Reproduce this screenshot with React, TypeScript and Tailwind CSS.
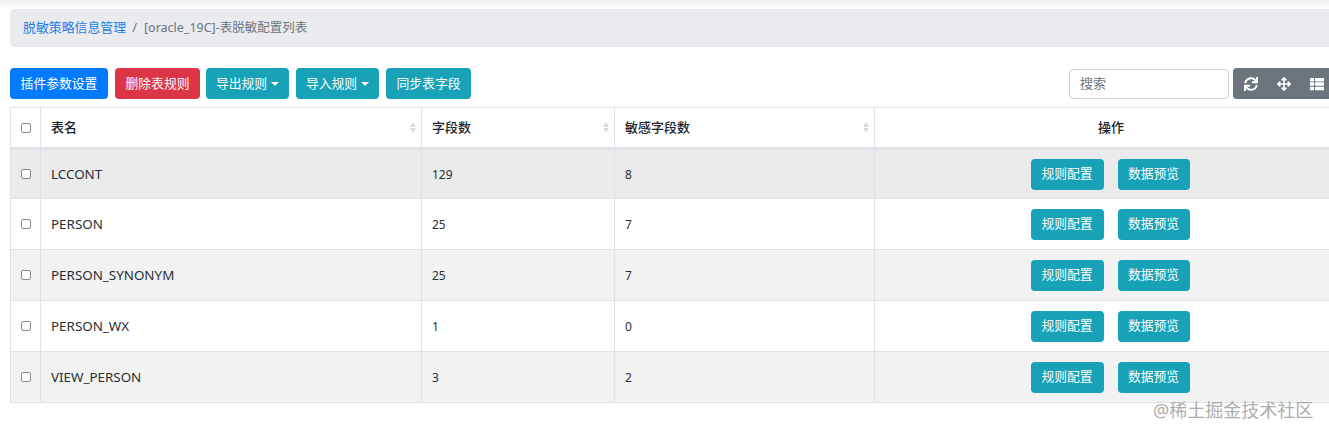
import { FaSync, FaArrowsAlt, FaThList } from "react-icons/fa";

const rows = [
  { name: "LCCONT", fields: 129, sensitive: 8, bg: "bg-[#ebebeb]", h: "h-[50px]" },
  { name: "PERSON", fields: 25, sensitive: 7, bg: "bg-white", h: "h-[51px]" },
  { name: "PERSON_SYNONYM", fields: 25, sensitive: 7, bg: "bg-[#f2f2f2]", h: "h-[51px]" },
  { name: "PERSON_WX", fields: 1, sensitive: 0, bg: "bg-white", h: "h-[51px]" },
  { name: "VIEW_PERSON", fields: 3, sensitive: 2, bg: "bg-[#f2f2f2]", h: "h-[51px]" },
];

function Button({ label, color, caret, width }: { label: string; color: string; caret?: boolean; width: string }) {
  return (
    <button className={`${color} ${width} h-[31px] rounded-[4px] text-white text-[12.8px] flex items-center justify-center gap-1`}>
      {label}
      {caret && <span className="w-0 h-0 border-x-[4px] border-x-transparent border-t-[4px] border-t-white" />}
    </button>
  );
}

function SortArrows() {
  return (
    <span className="flex flex-col gap-[1px]">
      <span className="w-0 h-0 border-x-[3px] border-x-transparent border-b-[5px] border-b-[#dcdcdc]" />
      <span className="w-0 h-0 border-x-[3px] border-x-transparent border-t-[5px] border-t-[#dcdcdc]" />
    </span>
  );
}

function Checkbox() {
  return <span className="block mx-auto w-[10px] h-[10px] border border-[#8a8a8a] rounded-[2px] bg-white" />;
}

export default function App() {
  return (
    <div className="h-[436px] w-[1329px] overflow-hidden relative bg-white font-['Noto_Sans','Noto_Sans_CJK_SC',sans-serif] text-[13px] text-[#2b2f33]">
      {/* top shadow */}
      <div className="h-[9px] bg-gradient-to-b from-[#f1f1f1] to-white" />

      <div className="w-[1348px] pl-[10px]">
        {/* breadcrumb */}
        <div className="h-[38px] bg-[#e9ebee] rounded-[4px] flex items-center pl-[13px]">
          <span className="text-[#1d7fe6] text-[12.9px]">脱敏策略信息管理</span>
          <span className="text-[#6c757d] ml-[6px] mr-[7px]">/</span>
          <span className="text-[#6c757d] text-[12.5px]">[oracle_19C]-表脱敏配置列表</span>
        </div>

        {/* toolbar */}
        <div className="flex items-center mt-[21px] h-[31px]">
          <div className="flex gap-[7px]">
            <Button label="插件参数设置" color="bg-[#007bff]" width="w-[98px]" />
            <Button label="删除表规则" color="bg-[#dc3545]" width="w-[85px] -mr-px" />
            <Button label="导出规则" color="bg-[#17a2b8]" width="w-[83px]" caret />
            <Button label="导入规则" color="bg-[#17a2b8]" width="w-[83px]" caret />
            <Button label="同步表字段" color="bg-[#17a2b8]" width="w-[85px]" />
          </div>
          <div className="ml-[598px] w-[160px] h-[30px] border border-[#ced4da] rounded-[4px] flex items-center pl-[10px] text-[#6c757d]">
            搜索
          </div>
          <div className="ml-[4px] w-[115px] h-[31px] bg-[#6c757d] rounded-[4px] flex items-center text-white pl-[11px] gap-[19px]">
            <FaSync className="w-[14px] h-[14px]" />
            <FaArrowsAlt className="w-[14px] h-[14px]" />
            <FaThList className="w-[14px] h-[14px]" />
          </div>
        </div>

        {/* table */}
        <table className="mt-[8px] w-[1338px] table-fixed border-collapse">
          <colgroup>
            <col className="w-[30px]" />
            <col className="w-[381px]" />
            <col className="w-[193px]" />
            <col className="w-[260px]" />
            <col />
          </colgroup>
          <thead>
            <tr className="h-[41px] border-b-[3px] border-b-[#dee2e6]">
              <th className="border border-[#dee2e6] border-b-0">
                <Checkbox />
              </th>
              {["表名", "字段数", "敏感字段数"].map((title) => (
                <th key={title} className="border border-[#dee2e6] border-b-0 pl-[10px] pr-[5px] font-medium text-left text-[#212529]">
                  <div className="flex items-center justify-between">
                    {title}
                    <SortArrows />
                  </div>
                </th>
              ))}
              <th className="border border-[#dee2e6] border-b-0 font-medium text-center text-[#212529]">操作</th>
            </tr>
          </thead>
          <tbody>
            {rows.map((row) => (
              <tr key={row.name} className={`${row.bg} ${row.h}`}>
                <td className="border border-[#dee2e6]">
                  <Checkbox />
                </td>
                <td className="border border-[#dee2e6] px-[10px] pt-[1px] text-[13.4px]">{row.name}</td>
                <td className="border border-[#dee2e6] px-[10px] pt-[1px] text-[12px]">{row.fields}</td>
                <td className="border border-[#dee2e6] px-[10px] pt-[1px] text-[12px]">{row.sensitive}</td>
                <td className="border border-[#dee2e6] pr-[2px]">
                  <div className="flex justify-center gap-[14px]">
                    <button className="w-[73px] h-[31px] bg-[#17a2b8] rounded-[4px] text-white text-[12.8px]">规则配置</button>
                    <button className="w-[72px] h-[31px] bg-[#17a2b8] rounded-[4px] text-white text-[12.8px]">数据预览</button>
                  </div>
                </td>
              </tr>
            ))}
          </tbody>
        </table>
      </div>

      {/* watermark */}
      <span className="absolute left-[1153px] top-[397px] text-[18px] text-[#9a9a9a] opacity-80 whitespace-nowrap">@稀土掘金技术社区</span>
    </div>
  );
}
